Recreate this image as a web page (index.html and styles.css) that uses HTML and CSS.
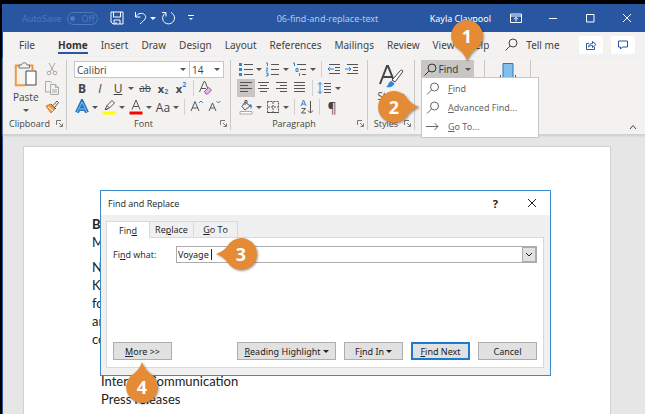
FILE: index.html
```html
<!DOCTYPE html>
<html lang="en">
<head>
  <meta charset="UTF-8">
  <meta name="viewport" content="width=device-width, initial-scale=1.0">
  <title>06-find-and-replace-text</title>
  <link rel="stylesheet" href="styles.css">
</head>
<body>
  <div class="window">
    <header class="titlebar">
      <div class="title-left">
        <span class="autosave">AutoSave</span>
        <button class="toggle" aria-label="AutoSave"><span class="dot"></span>Off</button>
        <button class="icon-btn save" aria-label="Save"><svg width="14" height="14" viewBox="0 0 14 14"><path d="M1 1h12v12H3l-2-2zM3.500 1v5h7V1M4 13V9h6v4M6 13v-2"/></svg></button>
        <button class="icon-btn undo" aria-label="Undo"><svg width="14" height="14" viewBox="0 0 14 14"><path d="M1.500 1v5h5M1.500 6C4 2 8 1.500 10.500 3.500c3 3 0 5.500-4.500 9.500"/></svg><span class="caret"></span></button>
        <button class="icon-btn" aria-label="Redo"><svg width="15" height="14" viewBox="0 0 15 14"><path d="M1 1.500h4v4M5 1.800C1 4 .5 9 4 11.800c4 2.700 9.500 0 9.500-4.800C13.500 4.500 12 2.500 10 1.500"/></svg></button>
        <button class="icon-btn customize" aria-label="Customize Quick Access Toolbar"><svg width="6" height="6" viewBox="0 0 6 6"><path d="M0 .5h6"/><path class="solid" d="M1 3h4L3 5z"/></svg></button>
      </div>
      <div class="doc-name">06-find-and-replace-text</div>
      <div class="title-right">
        <span class="user">Kayla Claypool</span>
        <button class="icon-btn" aria-label="Ribbon Display Options"><svg width="12" height="12" viewBox="0 0 12 12"><path d="M.5 2h11v8.500H.5zM.5 4h11M6 9.500V5.500M4 7.300l2-2 2 2"/></svg></button>
        <button class="icon-btn" aria-label="Minimize"><svg width="12" height="12" viewBox="0 0 12 12"><path d="M2 6.500h8"/></svg></button>
        <button class="icon-btn" aria-label="Maximize"><svg width="12" height="12" viewBox="0 0 12 12"><path d="M2.500 2.500h7.500v7.500H2.500z"/></svg></button>
        <button class="icon-btn" aria-label="Close"><svg width="12" height="12" viewBox="0 0 12 12"><path d="M2 2l8 8M10 2l-8 8"/></svg></button>
      </div>
    </header>

    <nav class="tabs">
      <a href="#" class="file">File</a>
      <a href="#" class="active">Home</a>
      <a href="#">Insert</a>
      <a href="#">Draw</a>
      <a href="#">Design</a>
      <a href="#">Layout</a>
      <a href="#">References</a>
      <a href="#">Mailings</a>
      <a href="#">Review</a>
      <a href="#">View</a>
      <a href="#">Help</a>
      <a href="#" class="tell-me"><svg width="13" height="13" viewBox="0 0 13 13"><circle cx="8" cy="5" r="4"/><path d="M5 8l-4.500 4.500"/></svg>Tell me</a>
      <div class="tab-actions">
        <button aria-label="Share"><svg width="12" height="12" viewBox="0 0 12 12"><path d="M4 4.500H1.500v6h8V8M3.500 8c.5-2.500 2-3.500 4-3.500V2.500l3.500 3-3.500 3v-2c-1.500 0-3 .3-4 1.500z"/></svg></button>
        <button aria-label="Comments"><svg width="12" height="12" viewBox="0 0 12 12"><path d="M1.500 2h9v6H5.500L3.500 10V8h-2z"/></svg></button>
      </div>
    </nav>

    <div class="ribbon">
      <!-- Clipboard -->
      <section class="group clipboard">
        <div class="group-body">
          <button class="paste">
            <svg width="24" height="26" viewBox="0 0 24 26"><path class="orange" d="M6 3.500H1.800v19.700H12M15 3.500h3.500V8"/><path class="fill-light" d="M5 6V3h2.500c0-3 5.500-3 5.500 0h2.500v3z"/><path class="fill-white" d="M12 9h10v14H12z"/></svg>
            Paste
            <span class="caret"></span>
          </button>
          <div class="rows">
            <button class="tool" aria-label="Cut"><svg width="16" height="16" viewBox="0 0 16 16"><path class="grey" d="M5 2l5 9M11 2l-5 9"/><circle class="grey" cx="5" cy="12" r="1.800"/><circle class="grey" cx="11" cy="12" r="1.800"/></svg></button>
            <button class="tool" aria-label="Copy"><svg width="16" height="16" viewBox="0 0 16 16"><path class="grey" d="M6 12H1.500V1.500h5L8 3M6.500 4.500h5l3 3v7h-8zM11.500 4.500v3h3M8 10h5M8 12h5"/></svg></button>
            <button class="tool" aria-label="Format Painter"><svg width="16" height="16" viewBox="0 0 16 16"><path class="orange-fill" d="M2 7l5-2 4 5-4 4z"/><path class="white-line" d="M4 8l5 4"/><path class="dark" d="M7 5l5 5M9.500 6l3.500-4 1.500 1.500L11 8"/></svg></button>
          </div>
        </div>
        <footer><span>Clipboard</span><svg class="launcher" width="7" height="7" viewBox="0 0 7 7"><path d="M.5 5V.5H5M3 3l3 3M6.500 3.500v3h-3"/></svg></footer>
      </section>

      <!-- Font -->
      <section class="group font">
        <div class="group-body rows">
          <div class="row selects">
            <span class="select family"><select aria-label="Font"><option>Calibri</option></select></span>
            <span class="select size"><select aria-label="Font Size"><option>14</option></select></span>
          </div>
          <div class="row">
            <button class="tool"><b>B</b></button>
            <button class="tool"><i>I</i></button>
            <button class="tool"><u>U</u></button><button class="drop" aria-label="Underline style"><span class="caret"></span></button>
            <button class="tool strike"><s>ab</s></button>
            <button class="tool script">x<sub>2</sub></button>
            <button class="tool script">x<sup>2</sup></button>
            <span class="sep"></span>
            <button class="tool" aria-label="Clear Formatting"><svg width="16" height="16" viewBox="0 0 16 16"><path class="dark" d="M1.500 12L6 1.500h1L10 9M3 8.500h5"/><path class="purple" d="M6.500 11.500l4-4 3 2.500-4 4H8z"/></svg></button>
          </div>
          <div class="row">
            <button class="tool" aria-label="Text Effects"><svg width="16" height="16" viewBox="0 0 16 16"><path class="effect" d="M3 13.500L8 3l5 10.500M5.500 10h5"/><path class="effect-in" d="M3 13.500L8 3l5 10.500M5.500 10h5"/></svg></button><button class="drop" aria-label="More effects"><span class="caret"></span></button>
            <button class="tool" aria-label="Highlight"><svg width="16" height="16" viewBox="0 0 16 16"><path class="yellow" d="M1.500 12.500h13v3h-13z"/><path class="dark" d="M4 10.500l2-4L11 1.500 13.500 4 8.500 9zM6 6.500L8.500 9M4 10.500h2.500"/></svg></button><button class="drop" aria-label="Highlight colours"><span class="caret"></span></button>
            <button class="tool" aria-label="Font Color"><svg width="16" height="16" viewBox="0 0 16 16"><path class="red" d="M1.500 12.500h13v3h-13z"/><path class="dark" d="M4 10.500L8 1l4 9.500M5.500 7.500h5"/></svg></button><button class="drop" aria-label="Font colours"><span class="caret"></span></button>
            <button class="tool">Aa</button><button class="drop" aria-label="Change case"><span class="caret"></span></button>
            <span class="sep"></span>
            <button class="tool" aria-label="Grow Font"><svg width="16" height="16" viewBox="0 0 16 16"><path class="dark" d="M2 12l4-9.500L10 12M3.500 9h5"/><path class="blue" d="M10 4l2-2 2 2"/></svg></button>
            <button class="tool" aria-label="Shrink Font"><svg width="16" height="16" viewBox="0 0 16 16"><path class="dark" d="M2 12l3.500-8L9 12M3.500 9h4"/><path class="blue" d="M9.500 2l2 2 2-2"/></svg></button>
          </div>
        </div>
        <footer><span>Font</span><svg class="launcher" width="7" height="7" viewBox="0 0 7 7"><path d="M.5 5V.5H5M3 3l3 3M6.500 3.500v3h-3"/></svg></footer>
      </section>

      <!-- Paragraph -->
      <section class="group paragraph">
        <div class="group-body rows">
          <div class="row">
            <button class="tool" aria-label="Bullets"><svg width="16" height="16" viewBox="0 0 16 16"><path class="dark" d="M6 3.500h9M6 8.500h9M6 13.500h9"/><path class="blue-fill" d="M1 2h3v3H1zM1 7h3v3H1zM1 12h3v3H1z"/></svg></button><button class="drop" aria-label="Bullet library"><span class="caret"></span></button>
            <button class="tool" aria-label="Numbering"><svg width="16" height="16" viewBox="0 0 16 16"><path class="dark" d="M6 3.500h8M6 8.500h8M6 13.500h8"/><path class="blue" d="M1 2h1.500v3M1 7h2L1 10h2M1 12h2v3H1M2 13.500h1"/></svg></button><button class="drop" aria-label="Numbering library"><span class="caret"></span></button>
            <button class="tool" aria-label="Multilevel List"><svg width="16" height="16" viewBox="0 0 16 16"><path class="dark" d="M5 3.500h9M8 8.500h6M10 13.500h4"/><path class="blue" d="M1 2h1.500v3M4 7.500h2v3H4zM7.500 12v3"/></svg></button><button class="drop" aria-label="List library"><span class="caret"></span></button>
            <span class="sep"></span>
            <button class="tool" aria-label="Decrease Indent"><svg width="16" height="16" viewBox="0 0 16 16"><path class="dark" d="M3 3.500h11M9 6.500h5M9 9.500h5M3 12.500h11"/><path class="blue" d="M8 8H2M4 6L2 8l2 2"/></svg></button>
            <button class="tool" aria-label="Increase Indent"><svg width="16" height="16" viewBox="0 0 16 16"><path class="dark" d="M3 3.500h11M9 6.500h5M9 9.500h5M3 12.500h11"/><path class="blue" d="M1 8h6M5 6l2 2-2 2"/></svg></button>
          </div>
          <div class="row">
            <button class="tool pressed" aria-label="Align Left"><svg width="16" height="16" viewBox="0 0 16 16"><path class="dark" d="M2 2.500h12M2 5.500h8M2 8.500h12M2 11.500h8"/></svg></button>
            <button class="tool" aria-label="Center"><svg width="16" height="16" viewBox="0 0 16 16"><path class="dark" d="M2 2.500h11M4 5.500h7M2 8.500h11M4 11.500h7"/></svg></button>
            <button class="tool" aria-label="Align Right"><svg width="16" height="16" viewBox="0 0 16 16"><path class="dark" d="M2 2.500h11M6 5.500h7M2 8.500h11M6 11.500h7"/></svg></button>
            <button class="tool" aria-label="Justify"><svg width="16" height="16" viewBox="0 0 16 16"><path class="dark" d="M2 2.500h11M2 5.500h11M2 8.500h11M2 11.500h11"/></svg></button>
            <span class="sep"></span>
            <button class="tool" aria-label="Line Spacing"><svg width="16" height="16" viewBox="0 0 16 16"><path class="dark" d="M7 3.500h7M7 6.500h7M7 9.500h7M7 12.500h7"/><path class="blue" d="M3 2.500v11M1 4.500l2-2 2 2M1 11.500l2 2 2-2"/></svg></button><button class="drop" aria-label="Spacing options"><span class="caret"></span></button>
          </div>
          <div class="row">
            <button class="tool" aria-label="Shading"><svg width="16" height="16" viewBox="0 0 16 16"><path class="dark" d="M7 3l5 4-5 4-3-3.500zM7 6V1.500h2v3"/><path class="blue-fill" d="M12 5c2 0 2.500 3 1 5-.5-2-1-3-2-3z"/><path class="bar" d="M2 12.500h12v2.500H2z"/></svg></button><button class="drop" aria-label="Shading colours"><span class="caret"></span></button>
            <button class="tool" aria-label="Borders"><svg width="16" height="16" viewBox="0 0 16 16"><path class="dark dashed" d="M2.500 2.500h11v11h-11zM8 3v10M3 8h10"/><path class="dark" d="M2 13.500h12"/></svg></button><button class="drop" aria-label="Border options"><span class="caret"></span></button>
            <span class="sep"></span>
            <button class="tool" aria-label="Sort"><svg width="16" height="16" viewBox="0 0 16 16"><path class="blue" d="M2 7l2.500-6L7 7M3 5h3"/><path class="dark" d="M2.500 9.500h4L2.500 14h4.500M11.500 2v12M9 11.500l2.500 2.500 2.500-2.500"/></svg></button>
            <span class="sep"></span>
            <button class="tool pilcrow">¶</button>
          </div>
        </div>
        <footer><span>Paragraph</span><svg class="launcher" width="7" height="7" viewBox="0 0 7 7"><path d="M.5 5V.5H5M3 3l3 3M6.500 3.500v3h-3"/></svg></footer>
      </section>

      <!-- Styles -->
      <section class="group styles">
        <div class="group-body">
          <button class="big">
            <svg width="26" height="26" viewBox="0 0 26 26"><path class="letter" d="M2 21L9 3h1l6 15M5 14h9"/><path class="fill-white" d="M14 17l8.500-9.500c1-1 3 0 2 1.500L17 19z"/><path class="blue-fill" d="M8 24c2 0 2-5 5.500-6l3 2.500C15 24 11 25 8 24z"/></svg>
            Styles
          </button>
        </div>
        <footer><span>Styles</span><svg class="launcher" width="7" height="7" viewBox="0 0 7 7"><path d="M.5 5V.5H5M3 3l3 3M6.500 3.500v3h-3"/></svg></footer>
      </section>

      <!-- Editing -->
      <section class="group editing">
        <button class="find-btn"><svg width="13" height="13" viewBox="0 0 13 13"><circle cx="8" cy="5" r="4"/><path d="M5 8l-4.500 4.500"/></svg>Find<span class="caret"></span></button>
        <div class="menu">
          <button><svg width="14" height="13" viewBox="0 0 14 13"><circle cx="8.500" cy="5" r="4"/><path d="M5.500 8L1 12.500"/></svg><span><u>F</u>ind</span></button>
          <button><svg width="14" height="13" viewBox="0 0 14 13"><circle cx="8.500" cy="5" r="4"/><path d="M5.500 8L1 12.500"/></svg><span><u>A</u>dvanced Find...</span></button>
          <button><svg width="14" height="13" viewBox="0 0 14 13"><path d="M0 6.500h12M8.500 3L12 6.500 8.500 10"/></svg><span><u>G</u>o To...</span></button>
        </div>
      </section>

      <section class="group voice">
        <svg width="18" height="24" viewBox="0 0 18 24"><path class="dark" d="M1.500 14v10M16.500 14v10"/><path class="mic" d="M4 2.500h10V24H4z"/></svg>
      </section>

      <button class="collapse" aria-label="Collapse the Ribbon"><svg width="8" height="6" viewBox="0 0 8 6"><path d="M1 5l3-3.500L7 5"/></svg></button>
    </div>

    <main class="workspace">
      <article class="page">
        <h1>B</h1>
        <p>M</p>
        <p class="body-text">N<br>Ke<br>fo<br>an<br>co</p>
        <ul>
          <li>Internal Communication</li>
          <li>Press releases</li>
        </ul>
      </article>
    </main>
  </div>

  <div class="dialog" role="dialog" aria-labelledby="dialog-title">
    <div class="dialog-title">
      <span id="dialog-title">Find and Replace</span>
      <button class="help">?</button>
      <button class="close" aria-label="Close"><svg width="10" height="10" viewBox="0 0 10 10"><path d="M1 1l8 8M9 1L1 9"/></svg></button>
    </div>
    <div class="dialog-body">
      <div class="dialog-tabs">
        <button class="selected">Fin<u>d</u></button>
        <button>Re<u>p</u>lace</button>
        <button><u>G</u>o To</button>
      </div>
      <div class="panel">
        <div class="field">
          <label for="find-what">Fi<u>n</u>d what:</label>
          <div class="combo">
            <input type="text" id="find-what" value="Voyage">
            <span class="text-cursor"></span>
            <button aria-label="Recent searches"><svg width="8" height="6" viewBox="0 0 8 6"><path d="M1 1l3 3 3-3"/></svg></button>
          </div>
        </div>
        <div class="actions">
          <button class="more"><u>M</u>ore &gt;&gt;</button>
          <button class="reading"><u>R</u>eading Highlight<span class="caret"></span></button>
          <button>F<u>i</u>nd In<span class="caret"></span></button>
          <button class="default"><u>F</u>ind Next</button>
          <button>Cancel</button>
        </div>
      </div>
    </div>
  </div>

  <!-- numbered steps -->
  <div class="step step-1"><svg width="32" height="42" viewBox="0 0 32 42"><path d="M16 0a16 16 0 0 1 11 27.500Q19 32 16 41 13 32 5 27.500A16 16 0 0 1 16 0z"/></svg><span>1</span></div>
  <div class="step step-2"><svg width="42" height="32" viewBox="0 0 42 32"><path d="M0 16A16 16 0 0 1 27.500 5Q32 13 41 16 32 19 27.500 27A16 16 0 0 1 0 16z"/></svg><span>2</span></div>
  <div class="step step-3"><svg width="42" height="32" viewBox="0 0 42 32"><path d="M42 16A16 16 0 0 0 14.500 5Q10 13 1 16 10 19 14.500 27A16 16 0 0 0 42 16z"/></svg><span>3</span></div>
  <div class="step step-4"><svg width="32" height="42" viewBox="0 0 32 42"><path d="M16 42a16 16 0 0 0 11-27.500Q19 10 16 1 13 10 5 14.500A16 16 0 0 0 16 42z"/></svg><span>4</span></div>
</body>
</html>
```

FILE: styles.css
```css
* {
  box-sizing: border-box;
}
body {
  margin: 0;
  height: 100vh;
  overflow: hidden;
  padding: 4px 0 0 2px;
  background: #000;
  color: #444;
  font-family: "Open Sans", "Noto Sans", sans-serif;
  font-size: 10px;
}
button {
  display: flex;
  align-items: center;
  justify-content: center;
  padding: 0;
  border: 0;
  background: none;
  color: inherit;
  font: inherit;
}
svg {
  display: block;
  flex: none;
  fill: none;
  stroke: currentColor;
}
u {
  text-underline-offset: 1px;
}
.caret {
  border: 3px solid transparent;
  border-top-color: #555;
  border-bottom: 0;
}
.window {
  height: 100%;
  display: flex;
  flex-direction: column;
  border-left: 1px solid #2856a0;
  background: #e6e6e6;
}

/* title bar */
.titlebar {
  display: grid;
  grid-template-columns: 1fr auto 1fr;
  align-items: center;
  height: 28px;
  padding: 0 12px 0 19px;
  background: #2856a0;
  color: #fff;
  font-family: "Noto Sans", sans-serif;
  font-size: 9px;
}
.title-left, .title-right {
  display: flex;
  align-items: center;
}
.autosave {
  width: 45px;
  color: #4d79bd;
}
.toggle {
  width: 31px;
  height: 13px;
  gap: 6px;
  margin-right: 12px;
  border: 1px solid #4d79bd;
  border-radius: 7px;
  color: #4d79bd;
}
.dot {
  width: 5px;
  height: 5px;
  border-radius: 50%;
  background: #4d79bd;
}
.save {
  margin-right: 10px;
}
.undo {
  gap: 2px;
  margin-right: 5px;
}
.titlebar .caret {
  border-top-color: #fff;
}
.customize {
  margin-left: 12px;
}
.solid {
  fill: currentColor;
  stroke: none;
}
.doc-name {
  color: #b4c9ea;
}
.title-right {
  justify-content: flex-end;
  gap: 25px;
}
.user {
  white-space: nowrap;
  margin-right: -6px;
}

/* ribbon tabs */
.tabs {
  display: flex;
  align-items: flex-start;
  gap: 13px;
  height: 25px;
  padding: 0 10px 0 16px;
  background: #f3f2f1;
  font-family: "Noto Sans", sans-serif;
}
.tabs a {
  height: 22px;
  padding-top: 5px;
  line-height: 16px;
  border-bottom: 2px solid transparent;
  color: #444;
  text-decoration: none;
  white-space: nowrap;
}
.tabs .file {
  margin-right: 10px;
}
.tabs .active {
  border-bottom-color: #2856a0;
  color: #333;
  font-weight: bold;
}
.tabs .tell-me {
  display: flex;
  align-items: center;
  gap: 8px;
  margin-left: 3px;
}
.tab-actions {
  display: flex;
  gap: 8px;
  margin: 4px 0 0 auto;
}
.tab-actions button {
  width: 24px;
  height: 18px;
  border-radius: 2px;
  background: #fff;
  color: #2856a0;
}

/* ribbon */
.ribbon {
  display: flex;
  height: 78px;
  background: #f3f2f1;
  border-bottom: 1px solid #d0d0d0;
  box-shadow: 0 1px 2px #ccc;
}
.group {
  position: relative;
  display: flex;
  flex-direction: column;
  margin: 3px 0 4px;
  padding-top: 1px;
  border-right: 1px solid #c8c8c8;
}
.group-body {
  display: flex;
  height: 57px;
}
.group footer {
  display: flex;
  align-items: center;
  height: 14px;
  padding-right: 3px;
  font-size: 9px;
}
.group footer span {
  flex: 1;
  text-align: center;
}
.launcher {
  stroke: #777;
}
.rows {
  display: flex;
  flex-direction: column;
  gap: 3px;
}
.row {
  display: flex;
  gap: 2px;
}
.tool {
  width: 16px;
  height: 16px;
  font-size: 12px;
}
.drop {
  width: 9px;
  margin-left: -2px;
}
.sep {
  width: 1px;
  margin: 0 2px;
  background: #d0d0d0;
}
.pressed {
  background: #c8c6c4;
  outline: 1px solid #c8c6c4;
}
.strike {
  font-size: 10px;
}
.script {
  font-size: 11px;
  font-weight: bold;
}
.script sub, .script sup {
  color: #2b88d8;
  font-size: 7px;
}
.script sub {
  align-self: flex-end;
}
.script sup {
  align-self: flex-start;
}
.pilcrow {
  font-size: 14px;
}
.clipboard {
  width: 64px;
}
.clipboard .group-body {
  justify-content: space-between;
  padding: 0 6px 0 10px;
}
.paste {
  flex-direction: column;
  justify-content: flex-start;
  gap: 2px;
  padding-top: 1px;
  line-height: 14px;
}
.paste .caret {
  margin-top: 3px;
}
.font {
  width: 164px;
}
.paragraph {
  width: 137px;
}
.font .group-body, .paragraph .group-body {
  padding-left: 7px;
}
.styles {
  width: 47px;
}
.editing {
  width: 70px;
  padding-left: 6px;
}
.voice {
  width: 46px;
  align-items: center;
}
.selects {
  gap: 0;
}
.select {
  position: relative;
  height: 17px;
  margin-bottom: -1px;
  border: 1px solid #c8c6c4;
  background: #fff;
}
.family {
  width: 116px;
}
.size {
  width: 35px;
  margin-left: -1px;
}
.select select {
  width: 100%;
  height: 100%;
  padding: 0 2px;
  border: 0;
  background: none;
  color: #444;
  font: 10px "Open Sans", sans-serif;
  appearance: none;
}
.select::after {
  content: "";
  position: absolute;
  top: 6px;
  right: 3px;
  border: 3px solid transparent;
  border-top-color: #555;
  border-bottom: 0;
}
.big {
  flex-direction: column;
  justify-content: flex-start;
  width: 100%;
  padding-top: 2px;
}
.find-btn {
  width: 53px;
  height: 18px;
  gap: 2px;
  margin-top: -1px;
  background: #c8c6c4;
  color: #333;
}
.find-btn .caret {
  margin-left: 5px;
}
.menu {
  position: absolute;
  z-index: 1;
  top: 17px;
  left: 6px;
  width: 118px;
  padding: 1px 0;
  border: 1px solid #c8c6c4;
  background: #fff;
  font-family: "Noto Sans", sans-serif;
  font-size: 9px;
}
.menu button {
  width: 100%;
  height: 19px;
  justify-content: flex-start;
  gap: 8px;
  padding-left: 4px;
  color: #666;
}
.collapse {
  align-self: flex-end;
  margin: 0 8px 4px auto;
}

/* icon colours */
.grey { stroke: #aaa; }
.dark { stroke: #555; }
.blue { stroke: #2b88d8; }
.blue-fill { fill: #2b88d8; stroke: none; }
.orange { stroke: #ee9a3f; stroke-width: 2; }
.orange-fill { fill: #f0a050; stroke: #e07a20; }
.white-line { stroke: #fff; }
.fill-light { fill: #f3f2f1; stroke: #777; }
.fill-white { fill: #fff; stroke: #444; }
.purple { fill: #e3b9ea; stroke: #a04bb3; }
.yellow { fill: #ff0; stroke: none; }
.red { fill: #f00; stroke: none; }
.bar { fill: #fff; stroke: #aaa; }
.dashed { stroke-dasharray: 2 1; }
.effect { stroke: #2374bb; stroke-width: 4; }
.effect-in { stroke: #8cc4f0; }
.letter { stroke: #444; stroke-width: 2; }
.mic { fill: #83beec; stroke: #2b78c0; }

/* document */
.workspace {
  flex: 1;
  min-height: 0;
  display: flex;
  padding: 11px 34px 0 20px;
}
.page {
  flex: 1;
  padding: 68px;
  border: 1px solid #d0d0d0;
  border-bottom: 0;
  background: #fff;
  color: #222;
  font: 13px/18px Lato, sans-serif;
}
.page h1, .page p, .page ul {
  margin: 0;
  padding: 0;
  font-size: 13px;
}
.page .body-text {
  margin: 7px 0 24px;
}
.page ul {
  padding-left: 9px;
  list-style: none;
}

/* find and replace */
.dialog {
  position: absolute;
  top: 190px;
  left: 100px;
  width: 451px;
  border: 1px solid #3c8ac8;
  background: #f0f0f0;
  color: #222;
  font-size: 9px;
}
.dialog-title {
  display: flex;
  align-items: center;
  height: 24px;
  padding: 0 13px 0 7px;
  background: #fff;
}
.help {
  margin-left: auto;
  font-size: 11px;
  font-weight: bold;
}
.close {
  margin-left: 29px;
}
.dialog-body {
  padding: 6px 6px 7px 5px;
}
.dialog-tabs {
  display: flex;
  align-items: flex-end;
}
.dialog-tabs button {
  height: 16px;
  width: 44px;
  border: 1px solid #d9d9d9;
  border-left: 0;
  border-bottom: 0;
}
.dialog-tabs .selected {
  height: 17px;
  margin-bottom: -1px;
  border-left: 1px solid #d9d9d9;
  background: #fff;
}
.panel {
  padding: 8px 6px 7px;
  border: 1px solid #d9d9d9;
  background: #fff;
}
.field {
  display: flex;
  align-items: center;
}
.field label {
  width: 63px;
}
.combo {
  position: relative;
  flex: 1;
  display: flex;
  height: 17px;
  border: 1px solid #acacac;
}
.combo input {
  flex: 1;
  min-width: 0;
  padding: 0 1px;
  border: 0;
  outline: 0;
  background: none;
  color: #222;
  font: 9px "Noto Sans", sans-serif;
}
.combo button {
  width: 14px;
  border: 1px solid #acacac;
  background: #e1e1e1;
}
.text-cursor {
  position: absolute;
  top: 2px;
  left: 34px;
  width: 1px;
  height: 11px;
  background: #222;
}
.actions {
  display: flex;
  align-items: flex-end;
  gap: 8px;
  margin-top: 79px;
  font-family: "Noto Sans", sans-serif;
}
.actions button {
  width: 59px;
  height: 18px;
  border: 1px solid #adadad;
  background: #e1e1e1;
}
.actions .caret {
  margin-left: 2px;
  border-top-color: #222;
}
.actions .more {
  margin-right: auto;
}
.actions .reading {
  width: 99px;
}
.actions .default {
  border: 2px solid #1a7bd0;
}

/* step markers */
.step {
  position: absolute;
  z-index: 2;
  color: #fff;
  font-size: 18px;
  font-weight: bold;
  line-height: 32px;
  text-align: center;
}
.step svg {
  fill: #e58a35;
  stroke: none;
  filter: drop-shadow(1px 1px 1px rgba(0,0,0,0.4));
}
.step span {
  position: absolute;
  top: 0;
  left: 0;
  width: 32px;
}
.step-1 {
  top: 20px;
  left: 451px;
}
.step-2 {
  top: 91px;
  left: 378px;
}
.step-3 {
  top: 238px;
  left: 215px;
}
.step-3 span {
  left: 10px;
}
.step-4 {
  top: 361px;
  left: 126px;
}
.step-4 span {
  top: 10px;
}
```
